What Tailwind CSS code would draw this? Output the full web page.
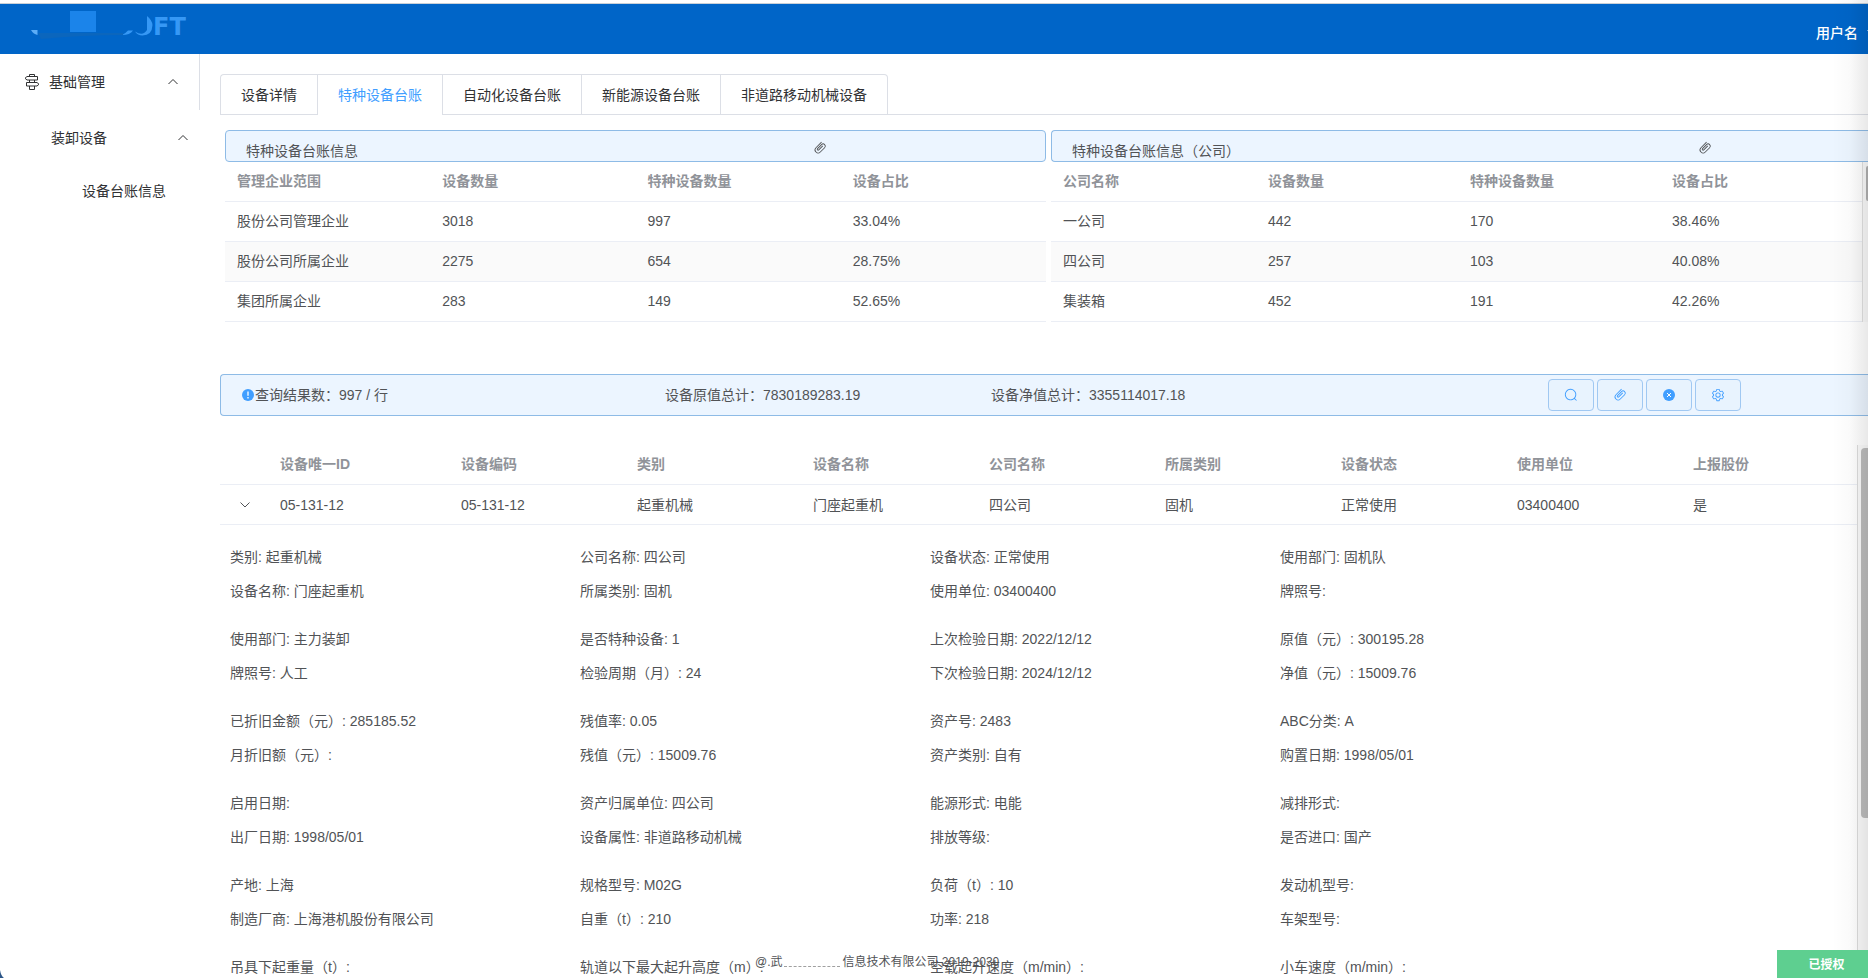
<!DOCTYPE html>
<html lang="zh-CN">
<head>
<meta charset="utf-8">
<title>特种设备台账</title>
<script src="https://cdn.jsdelivr.net/npm/@tailwindcss/browser@4"></script>
</head>
<body class="relative h-screen overflow-hidden bg-white font-['Liberation_Sans','Noto_Sans_CJK_SC',sans-serif] text-sm text-[#515356]">
<svg class="hidden" aria-hidden="true">
  <symbol id="clip" viewBox="0 0 1024 1024"><path fill="currentColor" d="M602.496 240.448A192 192 0 1 1 874.048 512l-316.8 316.8A256 256 0 0 1 195.2 466.752L602.496 59.456l45.248 45.248L240.448 512A192 192 0 0 0 512 783.552l316.8-316.8a128 128 0 1 0-181.056-181.056L353.6 579.904a32 32 0 1 0 45.248 45.248l294.144-294.144 45.312 45.248L444.096 670.4a96 96 0 1 1-135.744-135.744l294.144-294.208z"/></symbol>
  <symbol id="up" viewBox="0 0 12 12"><path d="M1.500 8 6 3.500l4.500 4.500" fill="none" stroke="currentColor"/></symbol>
  <symbol id="down" viewBox="0 0 12 12"><path d="M1.500 3.500 6 8l4.500-4.500" fill="none" stroke="currentColor"/></symbol>
</svg>
<div class="flex h-full flex-col">
  <header class="mt-[3px] flex h-[51px] shrink-0 items-center justify-between border-t border-[#c9d0d8] bg-[#0065c8]">
    <a href="#" class="ml-[30px] flex h-full items-start pt-[6px] text-[24px] leading-[34px] font-bold text-[#3698f5]" aria-label="首页">
      <svg class="h-[32px] w-[123px]" viewBox="0 0 123 32"><path d="M40 1h26v21H40z" fill="#1b84ea"/><path d="M1 20h6.500v5Q3 24 1 20z" fill="#5cadf7"/><path d="M92 25q8 0 11-4.500h-5Q95 24 92 25zM105 21.500q8 5 12-1.500V6q5 4 5.500 9-.5 10.500-10 10.500-5 0-7.500-4z" fill="#3698f5"/><path d="M8 23h85v2q-40 0-82 4z" fill="#0b66bd"/></svg>
      <span class="font-['DejaVu_Sans']">FT</span>
    </a>
    <button class="-mr-[10px] flex items-center gap-2 pt-[7px] text-sm font-medium text-white">用户名 <svg class="size-3"><use href="#down"/></svg></button>
  </header>
  <div class="flex min-h-0 grow">
    <nav class="w-[200px] shrink-0 text-[#303133]">
      <button class="flex h-14 w-full items-center border-r border-[#dcdfe6] pr-5 pl-6">
        <svg class="size-4" viewBox="0 0 16 16" fill="none" stroke="currentColor"><path d="M3 2.500h10.500v3.500H3L1 4.250zM2.500 8.500h10.500l2 1.750-2 1.750H2.500zM5.500 2.500V.5h5v2M5.500 6v2.500M10.500 6v2.500M5.500 12v3.500h5V12"/></svg>
        <span class="ml-[9px] grow text-left">基础管理</span>
        <svg class="size-3"><use href="#up"/></svg>
      </button>
      <button class="flex h-14 w-full items-center pr-[11px] pl-[51px]"><span class="grow text-left">装卸设备</span><svg class="size-3"><use href="#up"/></svg></button>
      <a href="#" class="flex h-[50px] items-center pl-[82px]">设备台账信息</a>
    </nav>
    <main class="min-w-0 grow overflow-hidden pt-5 pl-5">
      <div class="flex h-[41px] text-[#303133]" role="tablist">
        <button role="tab" class="rounded-tl border border-r-0 border-[#dcdfe6] px-5">设备详情</button>
        <button role="tab" aria-selected="true" class="border border-b-0 border-[#dcdfe6] px-5 text-[#409eff]">特种设备台账</button>
        <button role="tab" class="border border-l-0 border-[#dcdfe6] px-5">自动化设备台账</button>
        <button role="tab" class="border border-l-0 border-[#dcdfe6] px-5">新能源设备台账</button>
        <button role="tab" class="rounded-tr border border-l-0 border-[#dcdfe6] px-5">非道路移动机械设备</button>
        <div class="grow border-b border-[#dcdfe6]"></div>
      </div>
      <div class="mt-[15px] ml-[5px] flex gap-[5px]">
        <section class="w-[821px] shrink-0">
          <h2 class="flex h-8 items-center justify-between rounded border border-[#8ebbe6] bg-[#ecf5ff] pr-[218px] pl-5"><span class="pt-[10px]">特种设备台账信息</span><button class="pt-1" aria-label="附件"><svg class="size-[14px]"><use href="#clip"/></svg></button></h2>
          <table class="w-full table-fixed text-left">
            <thead class="text-[#909399]"><tr class="h-[39px] border-b border-[#ebeef5]"><th class="pl-3">管理企业范围</th><th class="pl-3">设备数量</th><th class="pl-3">特种设备数量</th><th class="pl-3">设备占比</th></tr></thead>
            <tbody>
              <tr class="h-10 border-b border-[#ebeef5]"><td class="pl-3">股份公司管理企业</td><td class="pl-3">3018</td><td class="pl-3">997</td><td class="pl-3">33.04%</td></tr>
              <tr class="h-10 border-b border-[#ebeef5] bg-[#fafafa]"><td class="pl-3">股份公司所属企业</td><td class="pl-3">2275</td><td class="pl-3">654</td><td class="pl-3">28.75%</td></tr>
              <tr class="h-10 border-b border-[#ebeef5]"><td class="pl-3">集团所属企业</td><td class="pl-3">283</td><td class="pl-3">149</td><td class="pl-3">52.65%</td></tr>
            </tbody>
          </table>
        </section>
        <section class="min-w-0 grow">
          <h2 class="flex h-8 items-center justify-between rounded-l border border-r-0 border-[#8ebbe6] bg-[#ecf5ff] pr-[156px] pl-5"><span class="pt-[10px]">特种设备台账信息（公司）</span><button class="pt-1" aria-label="附件"><svg class="size-[14px]"><use href="#clip"/></svg></button></h2>
          <div class="flex">
            <div class="min-w-0 grow">
              <table class="w-full table-fixed text-left">
                <thead class="text-[#909399]"><tr class="h-[39px] border-b border-[#ebeef5]"><th class="w-[205px] pl-3">公司名称</th><th class="pl-3">设备数量</th><th class="pl-3">特种设备数量</th><th class="pl-3">设备占比</th></tr></thead>
                <tbody>
                  <tr class="h-10 border-b border-[#ebeef5]"><td class="pl-3">一公司</td><td class="pl-3">442</td><td class="pl-3">170</td><td class="pl-3">38.46%</td></tr>
                  <tr class="h-10 border-b border-[#ebeef5] bg-[#fafafa]"><td class="pl-3">四公司</td><td class="pl-3">257</td><td class="pl-3">103</td><td class="pl-3">40.08%</td></tr>
                  <tr class="h-10 border-b border-[#ebeef5]"><td class="pl-3">集装箱</td><td class="pl-3">452</td><td class="pl-3">191</td><td class="pl-3">42.26%</td></tr>
                </tbody>
              </table>
            </div>
            <div class="flex w-[6px] shrink-0 justify-end border-l border-[#e0e0e0] bg-[#fafafa] pt-1"><div class="h-[35px] w-[2px] rounded-l bg-[#b0b0b0]"></div></div>
          </div>
        </section>
      </div>
      <div class="mt-[52px] flex h-[42px] items-center rounded-l border border-r-0 border-[#8ebbe6] bg-[#ecf5ff] pr-[127px] pl-5">
        <svg class="size-[14px]" viewBox="0 0 14 14"><circle cx="7" cy="7" r="6" fill="#409eff"/><path d="M7 3.500v4.200M7 9v1.500" stroke="#fff" stroke-width="1.300"/></svg>
        <span class="w-[410px]">查询结果数：997 / 行</span>
        <span class="w-[326px]">设备原值总计：7830189283.19</span>
        <span class="grow">设备净值总计：3355114017.18</span>
        <div class="flex gap-[3px] pt-px text-[#409eff]">
          <button aria-label="查询" class="flex h-8 w-[46px] items-center justify-center rounded border border-[#a0c8f2] bg-[#e8f3fe]"><svg class="size-[14px]" viewBox="0 0 1024 1024"><path fill="currentColor" d="m795.904 750.720 124.992 124.928a32 32 0 0 1-45.248 45.248L750.656 795.904a416 416 0 1 1 45.248-45.248zM480 832a352 352 0 1 0 0-704 352 352 0 0 0 0 704z"/></svg></button>
          <button aria-label="附件" class="flex h-8 w-[46px] items-center justify-center rounded border border-[#a0c8f2] bg-[#e8f3fe]"><svg class="size-[14px]"><use href="#clip"/></svg></button>
          <button aria-label="清除" class="flex h-8 w-[46px] items-center justify-center rounded border border-[#a0c8f2] bg-[#e8f3fe]"><svg class="size-[14px]" viewBox="0 0 14 14"><circle cx="7" cy="7" r="6" fill="currentColor"/><path d="m5 5 4 4m0-4L5 9" stroke="#fff"/></svg></button>
          <button aria-label="设置" class="flex h-8 w-[46px] items-center justify-center rounded border border-[#a0c8f2] bg-[#e8f3fe]"><svg class="size-[14px]" viewBox="0 0 1024 1024"><path fill="currentColor" d="M600.704 64a32 32 0 0 1 30.464 22.208l35.200 109.376c14.784 7.232 28.928 15.360 42.432 24.512l112.384-24.192a32 32 0 0 1 34.432 15.360L944.320 364.800a32 32 0 0 1-4.032 37.504l-77.120 85.120a357.120 357.120 0 0 1 0 49.024l77.120 85.248a32 32 0 0 1 4.032 37.504l-88.704 153.600a32 32 0 0 1-34.432 15.296L708.800 803.904c-13.440 9.088-27.648 17.280-42.368 24.512l-35.264 109.376A32 32 0 0 1 600.704 960H423.296a32 32 0 0 1-30.464-22.208L357.696 828.480a351.616 351.616 0 0 1-42.560-24.640l-112.320 24.256a32 32 0 0 1-34.432-15.360L79.680 659.200a32 32 0 0 1 4.032-37.504l77.120-85.248a357.120 357.120 0 0 1 0-48.896l-77.120-85.248A32 32 0 0 1 79.680 364.800l88.704-153.600a32 32 0 0 1 34.432-15.296l112.320 24.256c13.568-9.152 27.776-17.408 42.560-24.640l35.200-109.312A32 32 0 0 1 423.232 64H600.640zm-23.424 64H446.720l-36.352 113.088-24.512 11.968a294.113 294.113 0 0 0-34.816 20.096l-22.656 15.360-116.224-25.088-65.280 113.152 79.680 88.192-1.920 27.136a293.120 293.120 0 0 0 0 40.192l1.920 27.136-79.808 88.192 65.344 113.152 116.224-25.024 22.656 15.296a294.113 294.113 0 0 0 34.816 20.096l24.512 11.968L446.720 896h130.688l36.480-113.152 24.448-11.904a288.282 288.282 0 0 0 34.752-20.096l22.592-15.296 116.288 25.024 65.280-113.152-79.744-88.192 1.920-27.136a293.120 293.120 0 0 0 0-40.256l-1.920-27.136 79.808-88.128-65.344-113.152-116.288 24.960-22.592-15.232a287.616 287.616 0 0 0-34.752-20.096l-24.448-11.904L577.344 128zM512 320a192 192 0 1 1 0 384 192 192 0 0 1 0-384zm0 64a128 128 0 1 0 0 256 128 128 0 0 0 0-256z"/></svg></button>
        </div>
      </div>
      <div class="mt-[29px] flex">
        <div class="grow">
          <table class="w-full table-fixed text-left">
            <colgroup><col class="w-12"><col class="w-[181px]"><col><col><col><col><col><col><col></colgroup>
            <thead class="text-[#909399]"><tr class="h-10 border-b border-[#ebeef5]"><th aria-label="展开"></th><th class="pl-3">设备唯一ID</th><th class="pl-3">设备编码</th><th class="pl-3">类别</th><th class="pl-3">设备名称</th><th class="pl-3">公司名称</th><th class="pl-3">所属类别</th><th class="pl-3">设备状态</th><th class="pl-3">使用单位</th><th class="pl-3">上报股份</th></tr></thead>
            <tbody><tr class="h-10 border-b border-[#ebeef5]"><td><button class="ml-[19px] block" aria-label="收起" aria-expanded="true"><svg class="size-3"><use href="#down"/></svg></button></td><td class="pl-3">05-131-12</td><td class="pl-3">05-131-12</td><td class="pl-3">起重机械</td><td class="pl-3">门座起重机</td><td class="pl-3">四公司</td><td class="pl-3">固机</td><td class="pl-3">正常使用</td><td class="pl-3">03400400</td><td class="pl-3">是</td></tr></tbody>
          </table>
          <div class="grid grid-cols-[350px_350px_350px_1fr] gap-y-[14px] pt-[15px] pl-[10px] leading-[34px] whitespace-nowrap">
            <div><p>类别: 起重机械</p><p>设备名称: 门座起重机</p></div>
            <div><p>公司名称: 四公司</p><p>所属类别: 固机</p></div>
            <div><p>设备状态: 正常使用</p><p>使用单位: 03400400</p></div>
            <div><p>使用部门: 固机队</p><p>牌照号:</p></div>
            <div><p>使用部门: 主力装卸</p><p>牌照号: 人工</p></div>
            <div><p>是否特种设备: 1</p><p>检验周期（月）: 24</p></div>
            <div><p>上次检验日期: 2022/12/12</p><p>下次检验日期: 2024/12/12</p></div>
            <div><p>原值（元）: 300195.28</p><p>净值（元）: 15009.76</p></div>
            <div><p>已折旧金额（元）: 285185.52</p><p>月折旧额（元）:</p></div>
            <div><p>残值率: 0.05</p><p>残值（元）: 15009.76</p></div>
            <div><p>资产号: 2483</p><p>资产类别: 自有</p></div>
            <div><p>ABC分类: A</p><p>购置日期: 1998/05/01</p></div>
            <div><p>启用日期:</p><p>出厂日期: 1998/05/01</p></div>
            <div><p>资产归属单位: 四公司</p><p>设备属性: 非道路移动机械</p></div>
            <div><p>能源形式: 电能</p><p>排放等级:</p></div>
            <div><p>减排形式:</p><p>是否进口: 国产</p></div>
            <div><p>产地: 上海</p><p>制造厂商: 上海港机股份有限公司</p></div>
            <div><p>规格型号: M02G</p><p>自重（t）: 210</p></div>
            <div><p>负荷（t）: 10</p><p>功率: 218</p></div>
            <div><p>发动机型号:</p><p>车架型号:</p></div>
            <p>吊具下起重量（t）:</p>
            <p>轨道以下最大起升高度（m）:</p>
            <p>空载起升速度（m/min）:</p>
            <p>小车速度（m/min）:</p>
          </div>
        </div>
        <div class="flex w-[11px] shrink-0 justify-end border-l border-[#dcdcdc] bg-[#fafafa] pt-[3px]"><div class="h-[370px] w-[7px] rounded-l bg-[#bcbcbc]"></div></div>
      </div>
    </main>
  </div>
</div>
<footer class="absolute bottom-[6px] left-[755px] flex text-xs leading-5">@.武<span class="mt-[14px] mr-[3px] ml-px w-14 border-t border-dashed border-[#a0a0a0]"></span>信息技术有限公司 2019-2030</footer>
<div class="pointer-events-none absolute inset-y-0 right-0 w-9 bg-linear-to-r from-transparent via-black/2 to-black/9"></div>
<div class="absolute right-0 bottom-0 flex h-7 w-[91px] items-center justify-center bg-[#5ecf90] pt-px pl-2 text-xs font-bold text-white">已授权</div>
<svg class="absolute bottom-0 left-0 h-2 w-1" viewBox="0 0 4 8" aria-hidden="true"><path d="M0 0q1 6 4 8H0z" fill="#2c5688"/></svg>
</body>
</html>
